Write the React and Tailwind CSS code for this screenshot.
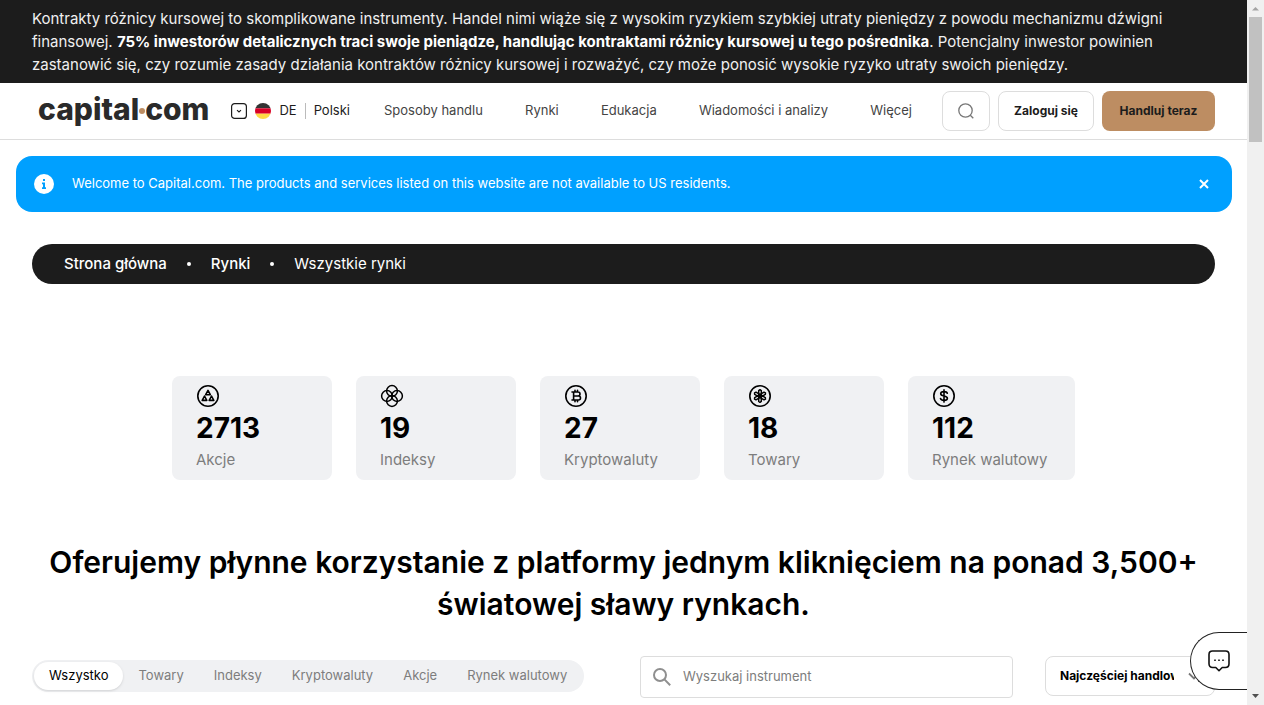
import React from "react";

const navLinks = ["Sposoby handlu", "Rynki", "Edukacja", "Wiadomości i analizy", "Więcej"];
const tabs = ["Wszystko", "Towary", "Indeksy", "Kryptowaluty", "Akcje", "Rynek walutowy"];

const iconProps = {
  viewBox: "0 0 24 24",
  className: "block size-6",
  fill: "none",
  stroke: "#000",
  strokeWidth: 1.6,
  strokeLinecap: "round",
  strokeLinejoin: "round",
  "aria-hidden": true,
};

function StocksIcon() {
  return (
    <svg {...iconProps}>
      <circle cx="12" cy="12" r="10.2" />
      <path d="M12 6.400l2.300 4.300H9.700zM8.500 12l2.300 4.400H6.200zM15.500 12l2.300 4.400h-4.600z" />
    </svg>
  );
}

function IndicesIcon() {
  return (
    <svg {...iconProps} strokeWidth={1.5}>
      <circle cx="12" cy="7" r="5.400" />
      <circle cx="12" cy="17" r="5.400" />
      <circle cx="7" cy="12" r="5.400" />
      <circle cx="17" cy="12" r="5.400" />
    </svg>
  );
}

function CryptoIcon() {
  return (
    <svg {...iconProps}>
      <circle cx="12" cy="12" r="10.2" />
      <path d="M8 8h6a2 2 0 0 1 0 4H9.600M8 16h6.500a2 2 0 0 0 0-4M9.600 8v8M11 6.300V8M13.500 6.300V8M11 16v1.700M13.500 16v1.700" />
    </svg>
  );
}

function CommoditiesIcon() {
  return (
    <svg {...iconProps} strokeWidth={1.5}>
      <circle cx="12" cy="12" r="10.2" strokeWidth={1.6} />
      {[0, 60, 120, 180, 240, 300].map((angle) => (
        <path
          key={angle}
          transform={`rotate(${angle} 12 12)`}
          d="M12 11.4L10.700 9V6.600L12 5.700l1.300.9V9z"
        />
      ))}
      <circle cx="12" cy="12" r="1.600" fill="#000" />
    </svg>
  );
}

function ForexIcon() {
  return (
    <svg {...iconProps}>
      <circle cx="12" cy="12" r="10.2" />
      <path d="M15.3 9.3c-.3-1-1.5-1.7-3.3-1.7-2 0-3.3.8-3.3 2.1 0 3.2 6.7 1.3 6.7 4.5 0 1.400-1.400 2.200-3.400 2.200s-3.200-.8-3.500-1.900M12 5.900v12.200" />
    </svg>
  );
}

const markets = [
  { icon: StocksIcon, count: "2713", label: "Akcje", width: "min-w-[160px]" },
  { icon: IndicesIcon, count: "19", label: "Indeksy", width: "min-w-[160px]" },
  { icon: CryptoIcon, count: "27", label: "Kryptowaluty", width: "min-w-[160px]" },
  { icon: CommoditiesIcon, count: "18", label: "Towary", width: "min-w-[160px]" },
  { icon: ForexIcon, count: "112", label: "Rynek walutowy", width: "min-w-[167px]" },
];

function RiskWarning() {
  return (
    <p className="bg-[#1c1c1c] px-8 py-[7px] text-[15px] leading-[23px] text-[#f0f0f0]">
      Kontrakty różnicy kursowej to skomplikowane instrumenty. Handel nimi wiąże się z wysokim
      ryzykiem szybkiej utraty pieniędzy z powodu mechanizmu dźwigni finansowej.{" "}
      <strong className="font-bold text-white">
        75% inwestorów detalicznych traci swoje pieniądze, handlując kontraktami różnicy kursowej u
        tego pośrednika
      </strong>
      . Potencjalny inwestor powinien zastanowić się, czy rozumie zasady działania kontraktów
      różnicy kursowej i rozważyć, czy może ponosić wysokie ryzyko utraty swoich pieniędzy.
    </p>
  );
}

function Header() {
  return (
    <header className="flex items-center border-b border-[#dddddd] py-2 pr-8 pl-[38px]">
      <a href="#" className="flex items-center pb-1 text-[30px] leading-9 font-extrabold text-[#2a2a2a]">
        capital
        <span className="mt-1 size-[6px] rounded-full bg-[#bd8d62]" />
        com
      </a>
      <button type="button" className="ml-[22px] flex items-center gap-2 text-[13px] text-[#1c1c1c]">
        <svg viewBox="0 0 16 16" className="size-4" fill="none" stroke="#1c1c1c" aria-hidden="true">
          <rect x="0.6" y="0.6" width="14.8" height="14.8" rx="3" strokeWidth="1.2" />
          <path d="M6 7.200l2 1.800 2-1.800" strokeWidth="1.100" />
        </svg>
        <svg viewBox="0 0 16 16" className="size-4" aria-hidden="true">
          <clipPath id="flag">
            <circle cx="8" cy="8" r="8" />
          </clipPath>
          <g clipPath="url(#flag)">
            <rect width="16" height="5.300" fill="#333" />
            <rect y="5.300" width="16" height="5.400" fill="#d80027" />
            <rect y="10.700" width="16" height="5.300" fill="#ffda44" />
          </g>
        </svg>
        <span>DE</span>
        <span className="h-4 border-l border-[#bbbbbb]" />
        <span>Polski</span>
      </button>
      <nav className="ml-[34px] mr-[30px] flex flex-1 justify-between text-[13px] text-[#444]">
        {navLinks.map((link) => (
          <a key={link} href="#" className="whitespace-nowrap">
            {link}
          </a>
        ))}
      </nav>
      <div className="flex gap-2 text-xs font-bold text-[#1c1c1c]">
        <button
          type="button"
          aria-label="Szukaj"
          className="grid h-10 w-12 place-items-center rounded-lg border border-[#dddddd]"
        >
          <svg viewBox="0 0 16 16" className="size-4" fill="none" stroke="#777" strokeWidth="1.300" aria-hidden="true">
            <circle cx="7.500" cy="7.500" r="6.700" />
            <path d="M12.300 12.300l3 3" />
          </svg>
        </button>
        <button type="button" className="h-10 w-24 rounded-lg border border-[#dddddd]">
          Zaloguj się
        </button>
        <button type="button" className="h-10 w-[113px] rounded-lg bg-[#bd8d62]">
          Handluj teraz
        </button>
      </div>
    </header>
  );
}

function Notice() {
  return (
    <div className="mr-[15px] ml-4 mt-4 flex h-14 items-center rounded-2xl bg-[#00a0ff] px-[18px] text-[13px] text-white">
      <svg viewBox="0 0 20 20" className="size-5" aria-hidden="true">
        <circle cx="10" cy="10" r="10" fill="#fff" />
        <path d="M9 5h2v2H9zM8 8.600h3v4.600h1V15H8v-1.800h1v-2.900H8z" fill="#00a0ff" />
      </svg>
      <p className="ml-[18px] flex-1">
        Welcome to Capital.com. The products and services listed on this website are not available
        to US residents.
      </p>
      <button type="button" aria-label="Zamknij" className="grid size-5 place-items-center">
        <svg viewBox="0 0 10 10" className="size-[10px]" stroke="#fff" strokeWidth="2" aria-hidden="true">
          <path d="M1 1l8 8M9 1L1 9" />
        </svg>
      </button>
    </div>
  );
}

function Breadcrumbs() {
  return (
    <nav
      aria-label="Breadcrumb"
      className="mt-8 flex h-10 items-center gap-5 rounded-full bg-[#1c1c1c] px-8 text-[15px] text-white"
    >
      <a href="#" className="font-medium">
        Strona główna
      </a>
      <span className="size-1 rounded-full bg-white" />
      <a href="#" className="font-medium">
        Rynki
      </a>
      <span className="size-1 rounded-full bg-white" />
      <span>Wszystkie rynki</span>
    </nav>
  );
}

function Filters() {
  return (
    <div className="mt-[31px] flex items-start gap-8">
      <div className="w-[576px] shrink-0 pt-1">
        <div className="inline-flex h-8 items-center rounded-full bg-[#f0f1f3] px-[2px] text-[13px] text-[#7d7d7d]">
          {tabs.map((tab, i) => (
            <button
              key={tab}
              type="button"
              className={
                i === 0
                  ? "h-7 rounded-full bg-white px-[15px] whitespace-nowrap text-black shadow"
                  : "h-7 px-[15px] whitespace-nowrap"
              }
            >
              {tab}
            </button>
          ))}
        </div>
      </div>
      <label className="flex h-[42px] flex-1 items-center gap-3 rounded border border-[#dddddd] px-3">
        <svg viewBox="0 0 18 18" className="size-[18px] shrink-0" fill="none" stroke="#8f8f8f" strokeWidth="2" aria-hidden="true">
          <circle cx="7" cy="7" r="6" />
          <path d="M11.400 11.400l5.800 5.800" />
        </svg>
        <input
          type="text"
          aria-label="Wyszukaj instrument"
          placeholder="Wyszukaj instrument"
          className="w-full min-w-0 text-[13px] outline-none placeholder:text-[#7d7d7d]"
        />
      </label>
      <div className="relative w-[170px]">
        <select
          aria-label="Sortowanie"
          className="h-10 w-full appearance-none rounded-lg border border-[#dddddd] bg-white pr-10 pl-[14px] text-xs font-bold text-black"
        >
          <option>Najczęściej handlowane</option>
        </select>
        <svg viewBox="0 0 12 8" className="pointer-events-none absolute top-4 right-[15px] w-3" fill="none" stroke="#777" strokeWidth="1.800" aria-hidden="true">
          <path d="M1 1.500l5 5 5-5" />
        </svg>
      </div>
    </div>
  );
}

function ChatButton() {
  return (
    <button
      type="button"
      aria-label="Czat"
      className="fixed right-[17px] bottom-[15px] flex h-[58px] w-[57px] items-center rounded-l-full border border-r-0 border-[#222] bg-white pl-[17px]"
    >
      <svg viewBox="0 0 22 22" className="size-[22px]" fill="none" stroke="#111" strokeWidth="1.600" strokeLinejoin="round" aria-hidden="true">
        <path d="M4.500 1h13C20 1 21 2.200 21 4.500v9.300c0 2.300-1.200 3.700-3.700 3.700h-3.100L11 20.700l-3.200-3.200H4.700C2.200 17.500 1 16.100 1 13.800V4.500C1 2.200 2.200 1 4.500 1z" />
        <path d="M6.200 10.200h1.600M10.200 10.200h1.600M14.200 10.200h1.600" />
      </svg>
    </button>
  );
}

function ScrollTrack() {
  return (
    <div
      aria-hidden="true"
      className="sticky top-0 flex h-screen w-[17px] shrink-0 flex-col items-center justify-between bg-[#f0f0f0]"
    >
      <div className="flex flex-col items-center">
        <svg viewBox="0 0 17 17" className="block size-[17px]">
          <path d="M5 10.500L8.500 7l3.500 3.500z" fill="#a3a3a3" />
        </svg>
        <div className="h-[125px] w-[13px] bg-[#c1c1c1]" />
      </div>
      <svg viewBox="0 0 17 17" className="block size-[17px]">
        <path d="M5 6l3.500 4L12 6z" fill="#505050" />
      </svg>
    </div>
  );
}

export default function App() {
  return (
    <div className="flex items-start bg-white font-['Inter',sans-serif] text-black">
      <div className="min-h-screen min-w-0 flex-1">
        <RiskWarning />
        <Header />
        <Notice />
        <main className="px-8">
          <Breadcrumbs />
          <ul className="mt-[92px] flex justify-center gap-6">
            {markets.map(({ icon: Icon, count, label, width }) => (
              <li key={label} className={width}>
                <a href="#" className="block rounded-lg bg-[#f0f1f3] px-6 py-2">
                  <Icon />
                  <strong className="block text-[28px] leading-10 font-bold">{count}</strong>
                  <span className="block text-[15px] leading-6 whitespace-nowrap text-[#7d7d7d]">
                    {label}
                  </span>
                </a>
              </li>
            ))}
          </ul>
          <h1 className="mt-[61px] text-center text-[30px] leading-[42px] font-semibold">
            Oferujemy płynne korzystanie z platformy jednym kliknięciem na ponad 3,500+ światowej
            sławy rynkach.
          </h1>
          <Filters />
        </main>
      </div>
      <ChatButton />
      <ScrollTrack />
    </div>
  );
}
